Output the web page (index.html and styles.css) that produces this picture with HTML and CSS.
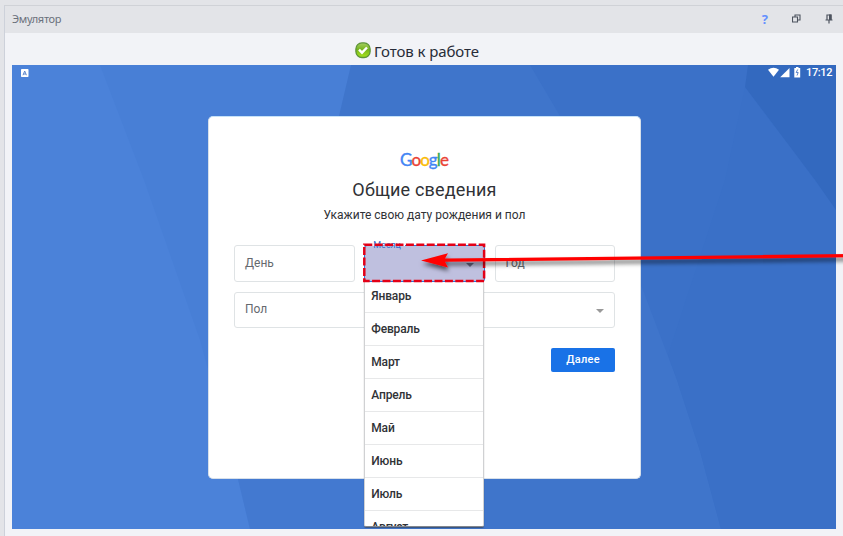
FILE: index.html
```html
<!DOCTYPE html>
<html lang="ru">
<head>
<meta charset="utf-8">
<title>Эмулятор</title>
<link rel="stylesheet" href="styles.css">
</head>
<body>
<section class="panel">
  <header class="panel-header">
    <span class="panel-title">Эмулятор</span>
    <div class="tools">
      <span class="help">?</span>
      <svg class="tool-restore" width="9" height="9" viewBox="0 0 9 9"><path d="M.5 3h5v5h-5zM3 3V1h5v5H5.500" /></svg>
      <svg class="tool-pin" width="8" height="10" viewBox="0 0 8 10"><path class="pin-line" d="M2 6V1h4v5M.5 6h7M4 6v3.500"/><path class="pin-fill" d="M4 .5h2.500V6H4z"/></svg>
    </div>
  </header>
  <div class="status">
    <svg width="16" height="17" viewBox="0 0 16 17">
      <defs><linearGradient id="ball" x1="0" y1="0" x2="0" y2="1"><stop offset="0" stop-color="#a5cf62"/><stop offset=".45" stop-color="#76b41e"/><stop offset="1" stop-color="#a8e51c"/></linearGradient></defs>
      <rect x=".9" y=".9" width="14.200" height="14.600" rx="6" fill="url(#ball)" stroke="#5d9438" stroke-width="1.300"/>
      <path d="M4 7.700l3 3 5-5.200" fill="none" stroke="#fff" stroke-width="2.400"/>
    </svg>
    <span class="status-text">Готов к работе</span>
  </div>
  <main class="screen">
    <svg class="wallpaper" viewBox="12 65 824 464" preserveAspectRatio="none">
      <rect x="12" y="65" width="824" height="464" fill="#4b82d9"/>
      <path d="M100 65L144 180 200 340 238 479 250 529H836V65z" fill="#487fd6"/>
      <path d="M208 365L238 479 250 529H400V365z" fill="#4379d0"/>
      <path d="M351 65L339 116 300 300 400 529H836V65z" fill="#3f75cb"/>
      <path d="M530 65L560 116 641 285 677 380 700 451 721 529H836V65z" fill="#3b71c8"/>
      <path d="M745 87L725 180 668 355 677 380 700 451 721 529H836V207L815 180z" fill="#3a70c7"/>
      <path d="M748 65L745 87 815 180 836 210V65z" fill="#3369bf"/>
    </svg>
    <div class="android-bar">
      <svg width="8" height="8" viewBox="0 0 8 8"><rect width="7.500" height="8" rx=".7" fill="#fff"/><path d="M2 6.200L3.700 2l1.700 4.200M2.600 5h2.200" fill="none" stroke="#5d87cc"/></svg>
      <div class="android-right">
        <svg width="26" height="11" viewBox="0 0 26 11"><path d="M0 2.700Q5.500-1.200 11 2.700L5.500 9.800z" fill="#fff"/><path d="M21.500 1v9.300h-9.300z" fill="#fff"/></svg>
        <svg class="battery" width="7" height="11" viewBox="0 0 7 11"><path d="M.3 1H2V0h2.500v1H6.200v9.500H.3z" fill="#fff"/><path d="M3.700 2.500L2.200 5.500h2L3 8.500" fill="none" stroke="#4b78c4" stroke-width=".9"/></svg>
        <span class="clock">17:12</span>
      </div>
    </div>
    <div class="card">
      <div class="logo"><span class="b">G</span><span class="r">o</span><span class="y">o</span><span class="b">g</span><span class="g">l</span><span class="r">e</span></div>
      <h1>Общие сведения</h1>
      <p>Укажите свою дату рождения и пол</p>
      <div class="date-row">
        <div class="field">День</div>
        <div class="field month">
          <span class="label">Месяц</span><i class="caret"></i>
          <div class="menu">
            <div>Январь</div><div>Февраль</div><div>Март</div><div>Апрель</div><div>Май</div><div>Июнь</div><div>Июль</div><div>Август</div>
          </div>
        </div>
        <div class="field">Год</div>
      </div>
      <div class="field gender">Пол<i class="caret"></i></div>
      <div class="actions"><button>Далее</button></div>
    </div>
  </main>
</section>
<svg class="annotation" width="843" height="536" viewBox="0 0 843 536">
  <defs><filter id="shade" x="-5%" y="-100%" width="110%" height="400%"><feDropShadow dx="1" dy="3.500" stdDeviation="2.200" flood-color="#000" flood-opacity=".6"/></filter></defs>
  <rect x="364.300" y="244.700" width="119.800" height="36.200" fill="none" stroke="#e30016" stroke-width="2.500" stroke-dasharray="8 2.400"/>
  <path filter="url(#shade)" d="M421 260.500L448 253.300 445 258.600 850 254V257.300L445 261.800 448 267.500z" fill="#f00"/>
</svg>
</body>
</html>
```
FILE: styles.css
```css
* { box-sizing: border-box; }
body { margin: 0; height: 536px; overflow: hidden; background: #e3e4e8; padding: 5px 0 0 4px; font-family: Roboto, sans-serif; }
.panel { height: 531px; border-left: 1px solid #cdd1da; border-top: 1px solid #d0d2d7; background: #f2f3f7; }
.panel-header { height: 27px; background: #e3e4e8; display: flex; justify-content: space-between; align-items: center; padding: 0 10px 2px 7px; }
.panel-title { font: 11px "Noto Sans", sans-serif; letter-spacing: -.3px; color: #6b717c; }
.tools { display: flex; align-items: center; }
.help { font: bold 13px "Noto Sans", sans-serif; color: #6590ff; margin-right: 24px; }
.tool-restore { margin-right: 24px; }
.tool-restore path { fill: none; stroke: #4d535e; stroke-width: 1.1; }
.pin-line { fill: none; stroke: #4d535e; stroke-width: 1.2; }
.pin-fill { fill: #4d535e; }
.status { height: 32px; display: flex; justify-content: center; align-items: flex-start; gap: 3px; padding: 9px 14px 0 0; }
.status-text { font: 15px/20px "Noto Sans", sans-serif; letter-spacing: -.08px; color: #272c38; white-space: nowrap; margin-top: -1px; }
.screen { position: relative; width: 824px; height: 464px; margin-left: 7px; overflow: hidden; }
.wallpaper { position: absolute; inset: 0; width: 100%; height: 100%; }
.android-bar { position: relative; height: 51px; padding: 2px 4px 0 9px; display: flex; justify-content: space-between; align-items: flex-start; }
.android-bar > svg { margin-top: 2px; }
.android-right { display: flex; align-items: flex-start; color: #fff; }
.battery { margin-right: 5px; }
.clock { font-size: 11px; line-height: 12px; font-weight: 500; letter-spacing: -.4px; }
.card { position: relative; width: 433px; height: 363px; margin-left: 196px; padding: 34px 25px 0; background: #fff; border: 1px solid #d7e0ea; border-top-color: #c6e2f8; border-radius: 5px; }
.logo { height: 22px; text-align: center; font: 400 17px/18px Lato, sans-serif; letter-spacing: -.9px; -webkit-text-stroke: .35px currentColor; padding-right: 1px; }
.logo .b { color: #4285f4; } .logo .r { color: #ea4335; } .logo .y { color: #fbbc05; } .logo .g { color: #34a853; }
h1 { margin: 5px 0 0; text-align: center; font-weight: 400; font-size: 18px; line-height: 24px; letter-spacing: .18px; color: #303236; }
p { margin: 6px 0 0; text-align: center; font-size: 12px; line-height: 15px; color: #303236; }
.date-row { display: flex; justify-content: space-between; margin-top: 22px; }
.field { position: relative; width: 120.5px; height: 36.5px; border: 1px solid #dfe3e5; border-radius: 3px; padding-left: 10px; font-size: 12px; line-height: 34px; color: #65696e; }
.gender { width: 100%; margin-top: 10px; line-height: 33px; }
.caret { position: absolute; right: 10px; top: 16px; border: 4px solid transparent; border-top-color: #999; border-bottom: 0; }
.month { z-index: 2; background: #bfc0df; border-color: #2974db; }
.month .caret { border-top-color: #656580; top: 17px; }
.label { position: absolute; left: 4px; top: -6px; height: 11px; padding: 0 4px; font-size: 9px; line-height: 11px; color: #316dc8; background: linear-gradient(#fff 6px, #bfc0df 6px); }
.menu { position: absolute; left: -1px; top: 36px; width: 120px; height: 245px; background: #fff; border: 1px solid #d0d1d3; border-top: 0; border-bottom-color: #83878d; box-shadow: 0 1px 1px #3338; border-radius: 0 0 2px 2px; overflow: hidden; }
.menu div { height: 33px; border-bottom: 1px solid #e7e8e9; padding-left: 6px; font-size: 12px; line-height: 33px; color: #303236; font-weight: 500; letter-spacing: -.15px; }
.menu div:first-child { height: 31px; line-height: 29px; }
.actions { display: flex; justify-content: flex-end; margin-top: 20px; }
button { width: 64px; height: 24px; border: 0; border-radius: 2px; padding: 0 0 1px; background: #1972e7; color: #fff; font: 500 11px Roboto, sans-serif; letter-spacing: .3px; }
.annotation { position: absolute; z-index: 5; left: 0; top: 0; }
```
